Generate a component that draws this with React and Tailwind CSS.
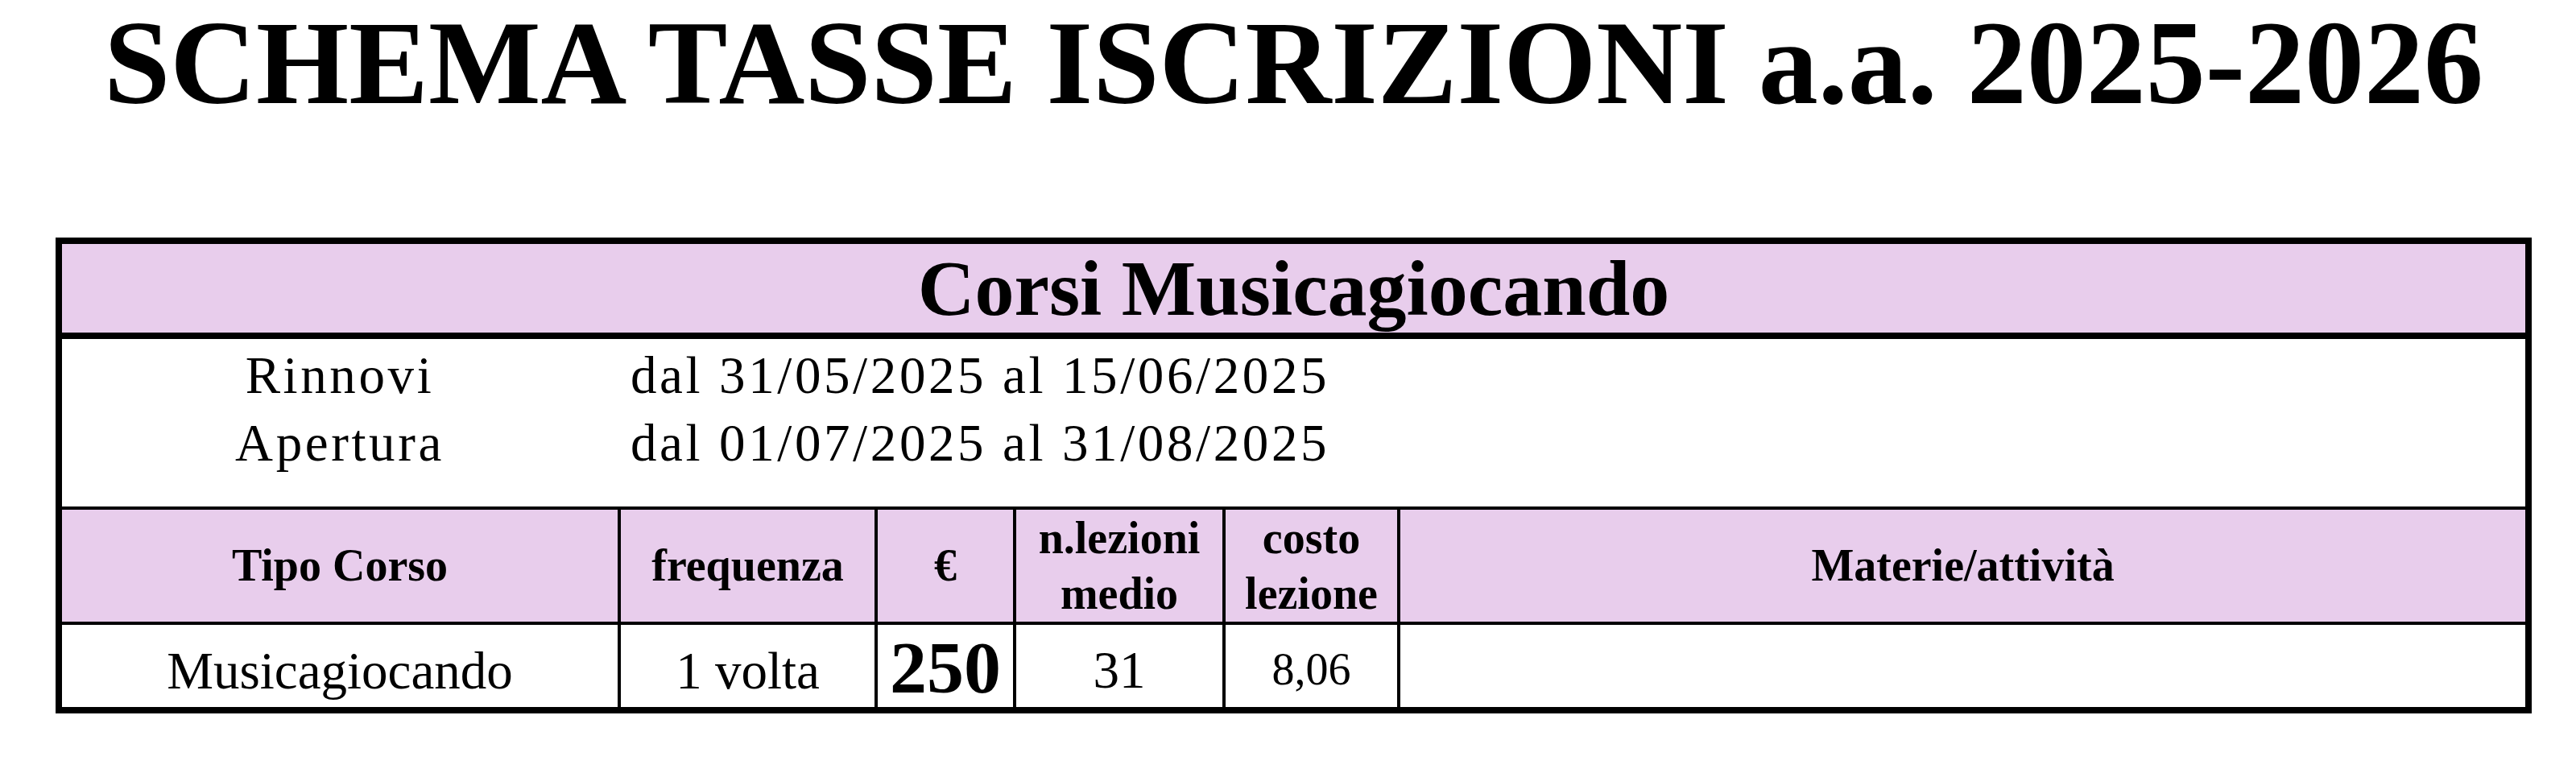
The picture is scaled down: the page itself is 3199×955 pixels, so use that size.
import React from "react";

const serif = { fontFamily: '"Liberation Serif", "Times New Roman", serif' };

export default function App() {
  const purple = "bg-[#e8cdec]";
  return (
    <div className="w-[3199px] h-[955px] bg-white text-black" style={serif}>
      <div className="ml-[69px] w-[3075px] pt-[4px]">
        <h1 className="text-center font-bold text-[148px] leading-none whitespace-nowrap">
          SCHEMA TASSE ISCRIZIONI a.a. 2025-2026
        </h1>

        <div className="mt-[143px] border-[8px] border-black">
          {/* Title bar */}
          <div className={`${purple} h-[118px] border-b-[8px] border-black flex items-center justify-center`}>
            <span className="font-bold text-[98px] leading-none">Corsi Musicagiocando</span>
          </div>

          {/* Dates */}
          <div className="h-[212px] border-b-[4px] border-black pt-[3px] text-[65px] leading-[84px] tracking-[3.6px]">
            <div className="flex">
              <div className="w-[690px] text-center">Rinnovi</div>
              <div className="pl-[16px]">dal 31/05/2025 al 15/06/2025</div>
            </div>
            <div className="flex">
              <div className="w-[690px] text-center">Apertura</div>
              <div className="pl-[16px]">dal 01/07/2025 al 31/08/2025</div>
            </div>
          </div>

          {/* Header row */}
          <div className={`${purple} h-[143px] border-b-[4px] border-black flex font-bold text-[56px] leading-[69px]`}>
            <div className="w-[694px] border-r-[4px] border-black flex items-center justify-center">Tipo Corso</div>
            <div className="w-[319px] border-r-[4px] border-black flex items-center justify-center">frequenza</div>
            <div className="w-[172px] border-r-[4px] border-black flex items-center justify-center">€</div>
            <div className="w-[260px] border-r-[4px] border-black flex items-center justify-center text-center">
              n.lezioni<br />medio
            </div>
            <div className="w-[217px] border-r-[4px] border-black flex items-center justify-center text-center">
              costo<br />lezione
            </div>
            <div className="flex-1 flex items-center justify-center">Materie/attività</div>
          </div>

          {/* Data row */}
          <div className="h-[102px] flex">
            <div className="w-[694px] border-r-[4px] border-black text-center text-[65px] leading-none pt-[25px]">Musicagiocando</div>
            <div className="w-[319px] border-r-[4px] border-black text-center text-[65px] leading-none pt-[25px]">1 volta</div>
            <div className="w-[172px] border-r-[4px] border-black text-center font-bold text-[92px] leading-none pt-[7px]">250</div>
            <div className="w-[260px] border-r-[4px] border-black text-center text-[65px] leading-none pt-[24px]">31</div>
            <div className="w-[217px] border-r-[4px] border-black text-center text-[56px] leading-none pt-[27px]">8,06</div>
            <div className="flex-1"></div>
          </div>
        </div>
      </div>
    </div>
  );
}
